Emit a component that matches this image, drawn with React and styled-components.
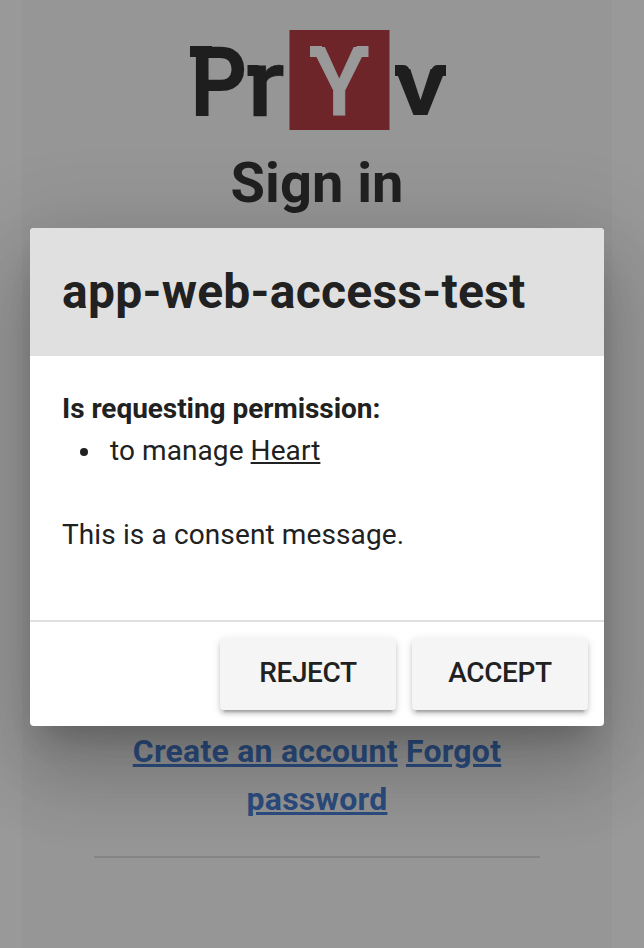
import React from "react";
import styled, { createGlobalStyle } from "styled-components";

const GlobalStyle = createGlobalStyle`
  *, *::before, *::after { box-sizing: border-box; }
  html, body { margin: 0; padding: 0; }
  body {
    background: #ffffff;
    color: #212121;
    font-family: Roboto, "Liberation Sans", sans-serif;
    font-size: 28px;
    line-height: 1.5;
    overflow: hidden;
  }
`;

const Screen = styled.div`
  position: relative;
  height: 948px;
  padding: 0 32px 0 22px;
  overflow: hidden;
`;

const SignInPage = styled.main`
  display: flex;
  flex-direction: column;
  align-items: center;
  height: 100%;
  padding: 30px 72px 0;
  background: #fafafa;
`;

const Logo = styled.svg`
  display: block;
  flex: none;
  width: 256px;
  height: 100px;
  margin-left: 2px;
  overflow: visible;
`;

const LogoLetter = styled.text`
  font-family: Roboto, sans-serif;
  font-weight: ${(p) => p.$weight || 700};
  font-size: ${(p) => p.$size}px;
  fill: ${(p) => (p.$light ? "#ffffff" : "#1c1c1c")};
`;

const PageTitle = styled.h1`
  margin: 21px 0 0;
  font-size: 56px;
  font-weight: 700;
  line-height: 64px;
`;

const FormArea = styled.div`
  flex: none;
  height: 512px;
`;

const Links = styled.nav`
  width: 446px;
  text-align: center;
  font-size: 32px;
  font-weight: 700;
  letter-spacing: 0.23px;
  line-height: 48px;
`;

const PageLink = styled.a`
  color: #3674cf;
  text-decoration: underline;
`;

const PageDivider = styled.hr`
  width: 446px;
  height: 2px;
  margin: 33px 0 0;
  border: 0;
  background: rgba(0, 0, 0, 0.12);
`;

const Overlay = styled.div`
  position: absolute;
  inset: 0;
  display: flex;
  align-items: flex-start;
  padding: 228px 40px 0 30px;
  background: rgba(33, 33, 33, 0.46);
`;

const Dialog = styled.section`
  display: flex;
  flex-direction: column;
  width: 574px;
  height: 498px;
  overflow: hidden;
  border-radius: 4px;
  background: #ffffff;
  box-shadow:
    0 22px 30px -14px rgba(0, 0, 0, 0.2),
    0 48px 76px 6px rgba(0, 0, 0, 0.14),
    0 18px 92px 16px rgba(0, 0, 0, 0.12);
`;

const DialogTitle = styled.h2`
  margin: 0;
  padding: 32px;
  background: #e0e0e0;
  font-size: 48px;
  font-weight: 700;
  letter-spacing: 0.26px;
  line-height: 64px;
`;

const DialogBody = styled.div`
  flex: 1;
  padding: 32px;
`;

const Lead = styled.strong`
  display: block;
  letter-spacing: -0.05px;
`;

const PermissionList = styled.ul`
  margin: 0 0 42px;
  padding: 0;
  list-style: none;
`;

const Permission = styled.li`
  display: flex;
  align-items: center;
  letter-spacing: 0.08px;
  white-space: pre;

  &::before {
    content: "";
    width: 8px;
    height: 8px;
    margin: 2px 22px 0 18px;
    border-radius: 50%;
    background: #212121;
  }
`;

const Message = styled.p`
  margin: 0;
  letter-spacing: 0.12px;
`;

const DialogActions = styled.footer`
  display: flex;
  justify-content: flex-end;
  gap: 16px;
  padding: 16px;
  border-top: 2px solid #e0e0e0;
`;

const ActionButton = styled.button`
  width: 176px;
  height: 72px;
  padding: 0 0 4px;
  border: 0;
  border-radius: 4px;
  background: #f5f5f5;
  color: #212121;
  font: 500 28px Roboto, "Liberation Sans", sans-serif;
  letter-spacing: -0.4px;
  text-transform: uppercase;
  box-shadow:
    0 6px 2px -4px rgba(0, 0, 0, 0.2),
    0 4px 4px 0 rgba(0, 0, 0, 0.14),
    0 2px 10px 0 rgba(0, 0, 0, 0.12);
`;

function PryvLogo() {
  return (
    <Logo viewBox="0 0 256 100" role="img" aria-label="PrYv">
      <rect x="99.5" width="100" height="100" fill="#ae2930" />
      <rect x="0" y="16" width="22" height="11" fill="#1c1c1c" />
      <LogoLetter $size={94} $weight={500} stroke="#1c1c1c" strokeWidth="2" x="0.5" y="85" textLength="56" lengthAdjust="spacingAndGlyphs">P</LogoLetter>
      <rect x="57.5" y="35" width="11" height="11" fill="#1c1c1c" />
      <LogoLetter $size={94} $weight={500} stroke="#1c1c1c" strokeWidth="0.6" x="57.5" y="86" textLength="37" lengthAdjust="spacingAndGlyphs">r</LogoLetter>
      <rect x="120" y="16" width="12" height="11" fill="#ffffff" />
      <rect x="166.5" y="16" width="12" height="11" fill="#ffffff" />
      <LogoLetter $light $size={95} $weight={500} stroke="#ffffff" strokeWidth="1" x="122" y="84.5" textLength="54.500" lengthAdjust="spacingAndGlyphs">Y</LogoLetter>
      <path d="M205 35h8q5 0 6.500 5l2 6h-16.500zM256 35h-8q-5 0-6.500 5l-2 6h16.500z" fill="#1c1c1c" />
      <LogoLetter $size={88} x="204.500" y="85" textLength="52" lengthAdjust="spacingAndGlyphs">v</LogoLetter>
    </Logo>
  );
}

export default function App() {
  return (
    <>
      <GlobalStyle />
      <Screen>
        <SignInPage>
          <PryvLogo />
          <PageTitle>Sign in</PageTitle>
          <FormArea />
          <Links>
            <PageLink>Create an account</PageLink> <PageLink>Forgot password</PageLink>
          </Links>
          <PageDivider />
        </SignInPage>
        <Overlay>
          <Dialog role="dialog" aria-labelledby="dialog-title">
            <DialogTitle id="dialog-title">app-web-access-test</DialogTitle>
            <DialogBody>
              <Lead>Is requesting permission:</Lead>
              <PermissionList>
                <Permission>to manage <u>Heart</u></Permission>
              </PermissionList>
              <Message>This is a consent message.</Message>
            </DialogBody>
            <DialogActions>
              <ActionButton>Reject</ActionButton>
              <ActionButton>Accept</ActionButton>
            </DialogActions>
          </Dialog>
        </Overlay>
      </Screen>
    </>
  );
}
